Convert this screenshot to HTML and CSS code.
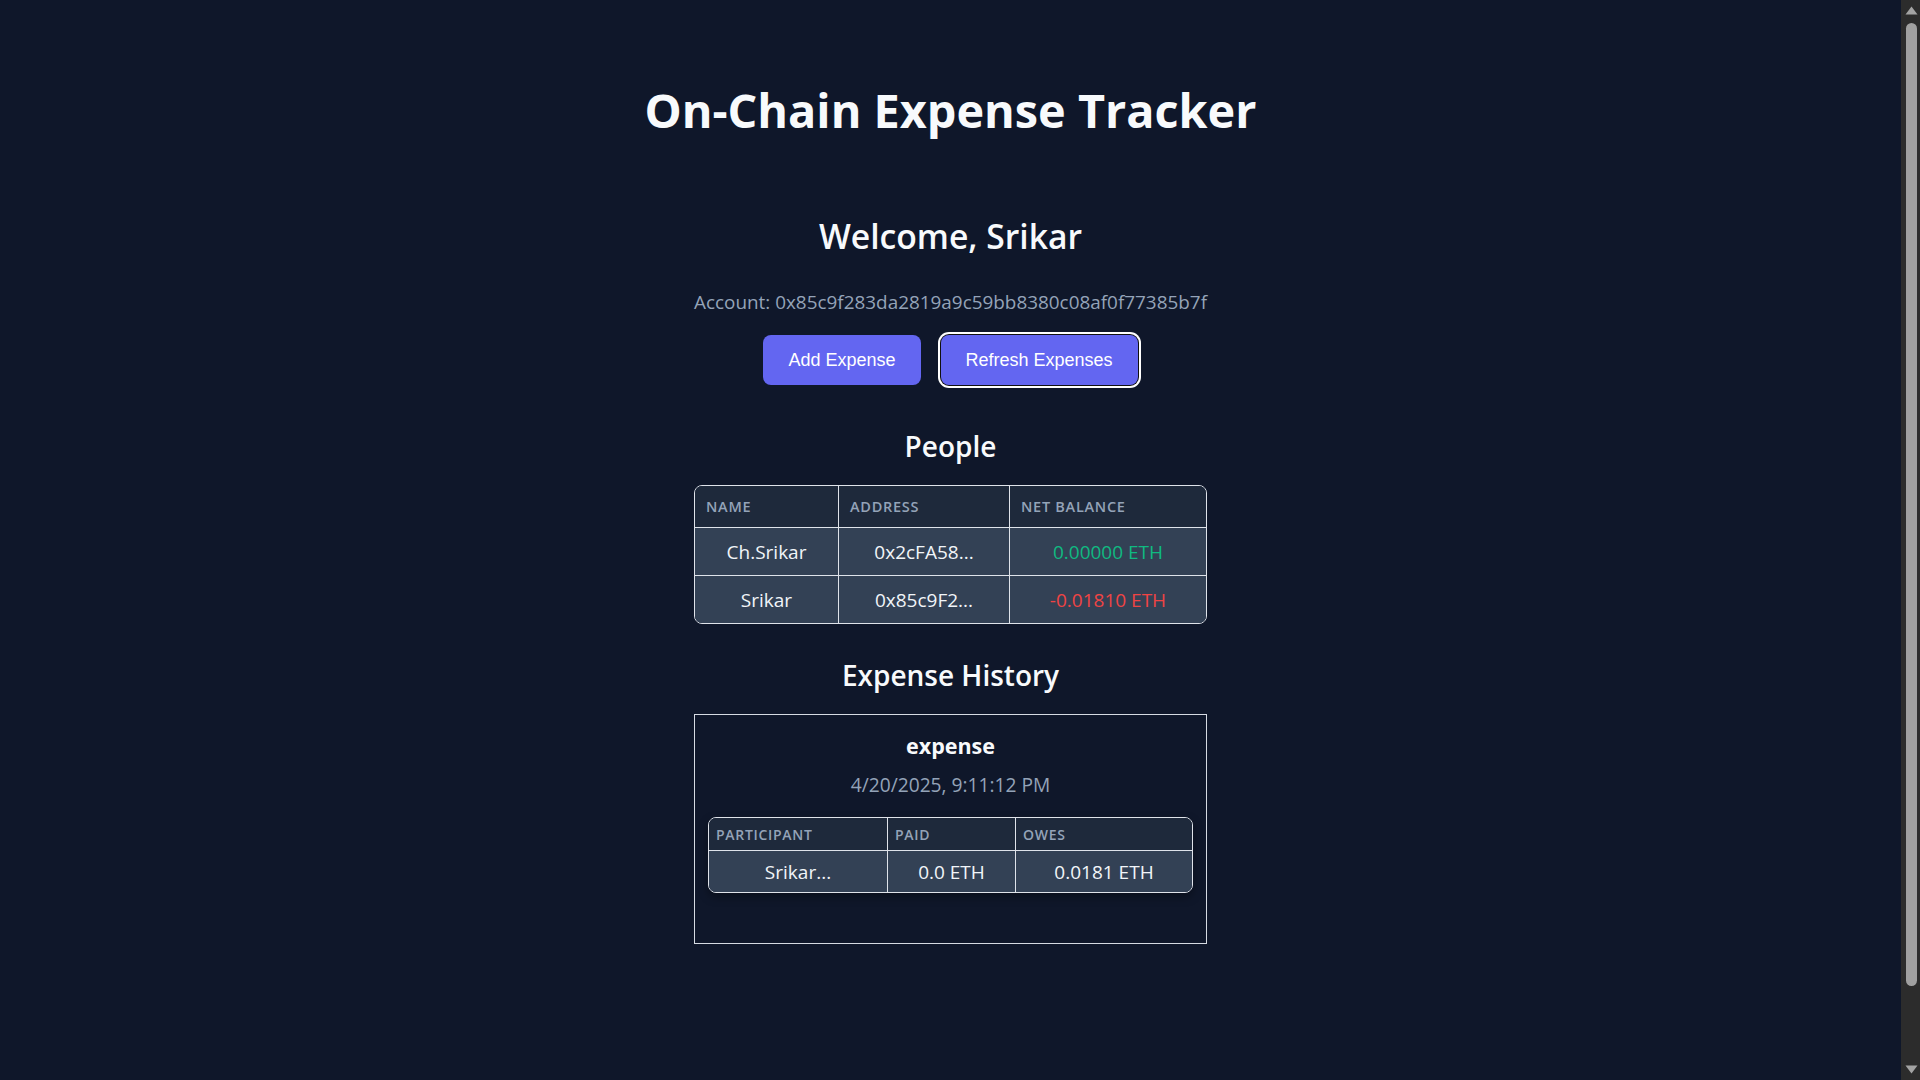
FILE: index.html
```html
<!DOCTYPE html>
<html lang="en">
<head>
<meta charset="utf-8">
<title>On-Chain Expense Tracker</title>
<link rel="stylesheet" href="styles.css">
</head>
<body>
<div class="app">
  <h1 class="title">On-Chain Expense Tracker</h1>
  <h2 class="welcome">Welcome, Srikar</h2>
  <p class="account">Account: 0x85c9f283da2819a9c59bb8380c08af0f77385b7f</p>
  <div class="actions">
    <button class="btn">Add Expense</button>
    <button class="btn btn-focus">Refresh Expenses</button>
  </div>

  <h3 class="section-title">People</h3>
  <div class="table-wrap people">
    <table class="data">
      <thead>
        <tr><th class="c-name">Name</th><th class="c-addr">Address</th><th class="c-bal">Net Balance</th></tr>
      </thead>
      <tbody>
        <tr><td>Ch.Srikar</td><td>0x2cFA58...</td><td class="pos">0.00000 ETH</td></tr>
        <tr><td>Srikar</td><td>0x85c9F2...</td><td class="neg">-0.01810 ETH</td></tr>
      </tbody>
    </table>
  </div>

  <h3 class="section-title history">Expense History</h3>
  <div class="card">
    <div class="exp-name">expense</div>
    <div class="exp-date">4/20/2025, 9:11:12 PM</div>
    <div class="table-wrap inner">
      <table class="data small">
        <thead>
          <tr><th class="c-part">Participant</th><th class="c-paid">Paid</th><th class="c-owes">Owes</th></tr>
        </thead>
        <tbody>
          <tr><td>Srikar...</td><td>0.0 ETH</td><td>0.0181 ETH</td></tr>
        </tbody>
      </table>
    </div>
  </div>
</div>

<div class="scrollbar" aria-hidden="true">
  <svg class="sb-arrow up" width="13" height="9" viewBox="0 0 13 9"><path d="M6.5 0.5 L12.5 8.5 L0.5 8.5 Z" fill="#a3a3a3"/></svg>
  <div class="sb-track"><div class="sb-thumb"></div></div>
  <svg class="sb-arrow down" width="13" height="9" viewBox="0 0 13 9"><path d="M0.5 0.5 L12.5 0.5 L6.5 8.5 Z" fill="#a3a3a3"/></svg>
</div>
</body>
</html>
```
FILE: styles.css
```css
html, body {
  margin: 0;
  padding: 0;
}
body {
  background: #0f172a;
  color: #f8fafc;
  font-family: "Open Sans", "Noto Sans", sans-serif;
}
.app {
  width: calc(100% - 19px);
  display: flex;
  flex-direction: column;
  align-items: center;
  padding: 80px 0 216px;
}
.title {
  margin: 0;
  font-size: 46.8px;
  line-height: 60px;
  font-weight: 700;
  color: #f8fafc;
}
.welcome {
  margin: 76px 0 0;
  font-size: 33.7px;
  line-height: 40px;
  font-weight: 600;
}
.account {
  margin: 34px 0 0;
  font-size: 18.9px;
  line-height: 24px;
  color: #94a3b8;
}
.actions {
  margin-top: 21px;
  display: flex;
  gap: 20px;
}
.btn {
  font-family: "Liberation Sans", Arial, sans-serif;
  font-size: 18px;
  line-height: 21px;
  color: #ffffff;
  background: #6366f1;
  border: 1px solid transparent;
  border-radius: 8px;
  padding: 13.5px 24px;
  cursor: pointer;
}
.btn-focus {
  box-shadow: 0 0 0 1px #101010, 0 0 0 3px #ffffff;
}
.section-title {
  margin: 45px 0 0;
  font-size: 28px;
  line-height: 32px;
  font-weight: 600;
}
.section-title.history {
  margin-top: 35px;
}
.table-wrap {
  border: 1px solid #dfe3ea;
  border-radius: 8px;
  overflow: hidden;
}
.people {
  margin-top: 23px;
  width: 511px;
}
.data {
  width: 100%;
  border-collapse: collapse;
  table-layout: fixed;
}
.data th {
  background: #1e293b;
  color: #94a3b8;
  text-align: left;
  text-transform: uppercase;
  font-size: 14.5px;
  font-weight: 600;
  letter-spacing: 0.05em;
  height: 41px;
  padding: 0 11px;
  border-bottom: 1px solid #dfe3ea;
}
.data td {
  background: #334155;
  color: #f1f5f9;
  text-align: center;
  font-size: 19px;
  height: 47px;
  padding: 0 8px;
  border-bottom: 1px solid #dfe3ea;
}
.data tr:last-child td {
  border-bottom: none;
}
.data th + th,
.data td + td {
  border-left: 1px solid #dfe3ea;
}
.c-name { width: 121px; }
.c-addr { width: 148px; }
.c-bal { width: auto; }
.data td.pos { color: #10b981; font-weight: 500; }
.data td.neg { color: #ef4444; font-weight: 500; }

.card {
  margin-top: 23px;
  width: 485px;
  border: 1px solid #d6dbe3;
  padding: 19px 13px 50px;
  display: flex;
  flex-direction: column;
  align-items: center;
}
.exp-name {
  font-size: 21.5px;
  line-height: 24px;
  font-weight: 700;
  color: #f8fafc;
}
.exp-date {
  margin-top: 15px;
  font-size: 19.2px;
  line-height: 24px;
  color: #94a3b8;
}
.inner {
  margin-top: 20px;
  width: 483px;
  box-shadow: 0 4px 10px rgba(0, 0, 0, 0.35);
}
.small th {
  height: 32px;
  padding: 0 7px;
  font-size: 14px;
}
.small td {
  height: 41px;
}
.c-part { width: 164px; }
.c-paid { width: 113px; }
.c-owes { width: auto; }

/* browser scrollbar as drawn in the reference */
.scrollbar {
  position: fixed;
  top: 0;
  right: 0;
  width: 19px;
  height: 100vh;
  background: #2c2c2c;
  display: flex;
  flex-direction: column;
  align-items: center;
}
.sb-arrow {
  flex: none;
  margin: 6px 0 6px 2px;
}
.sb-track {
  flex: 1;
  width: 100%;
  display: flex;
  justify-content: center;
  padding-left: 2px;
  box-sizing: border-box;
}
.sb-thumb {
  width: 11px;
  height: 963px;
  margin-top: 2px;
  background: #a0a0a0;
  border-radius: 6px;
}
```
